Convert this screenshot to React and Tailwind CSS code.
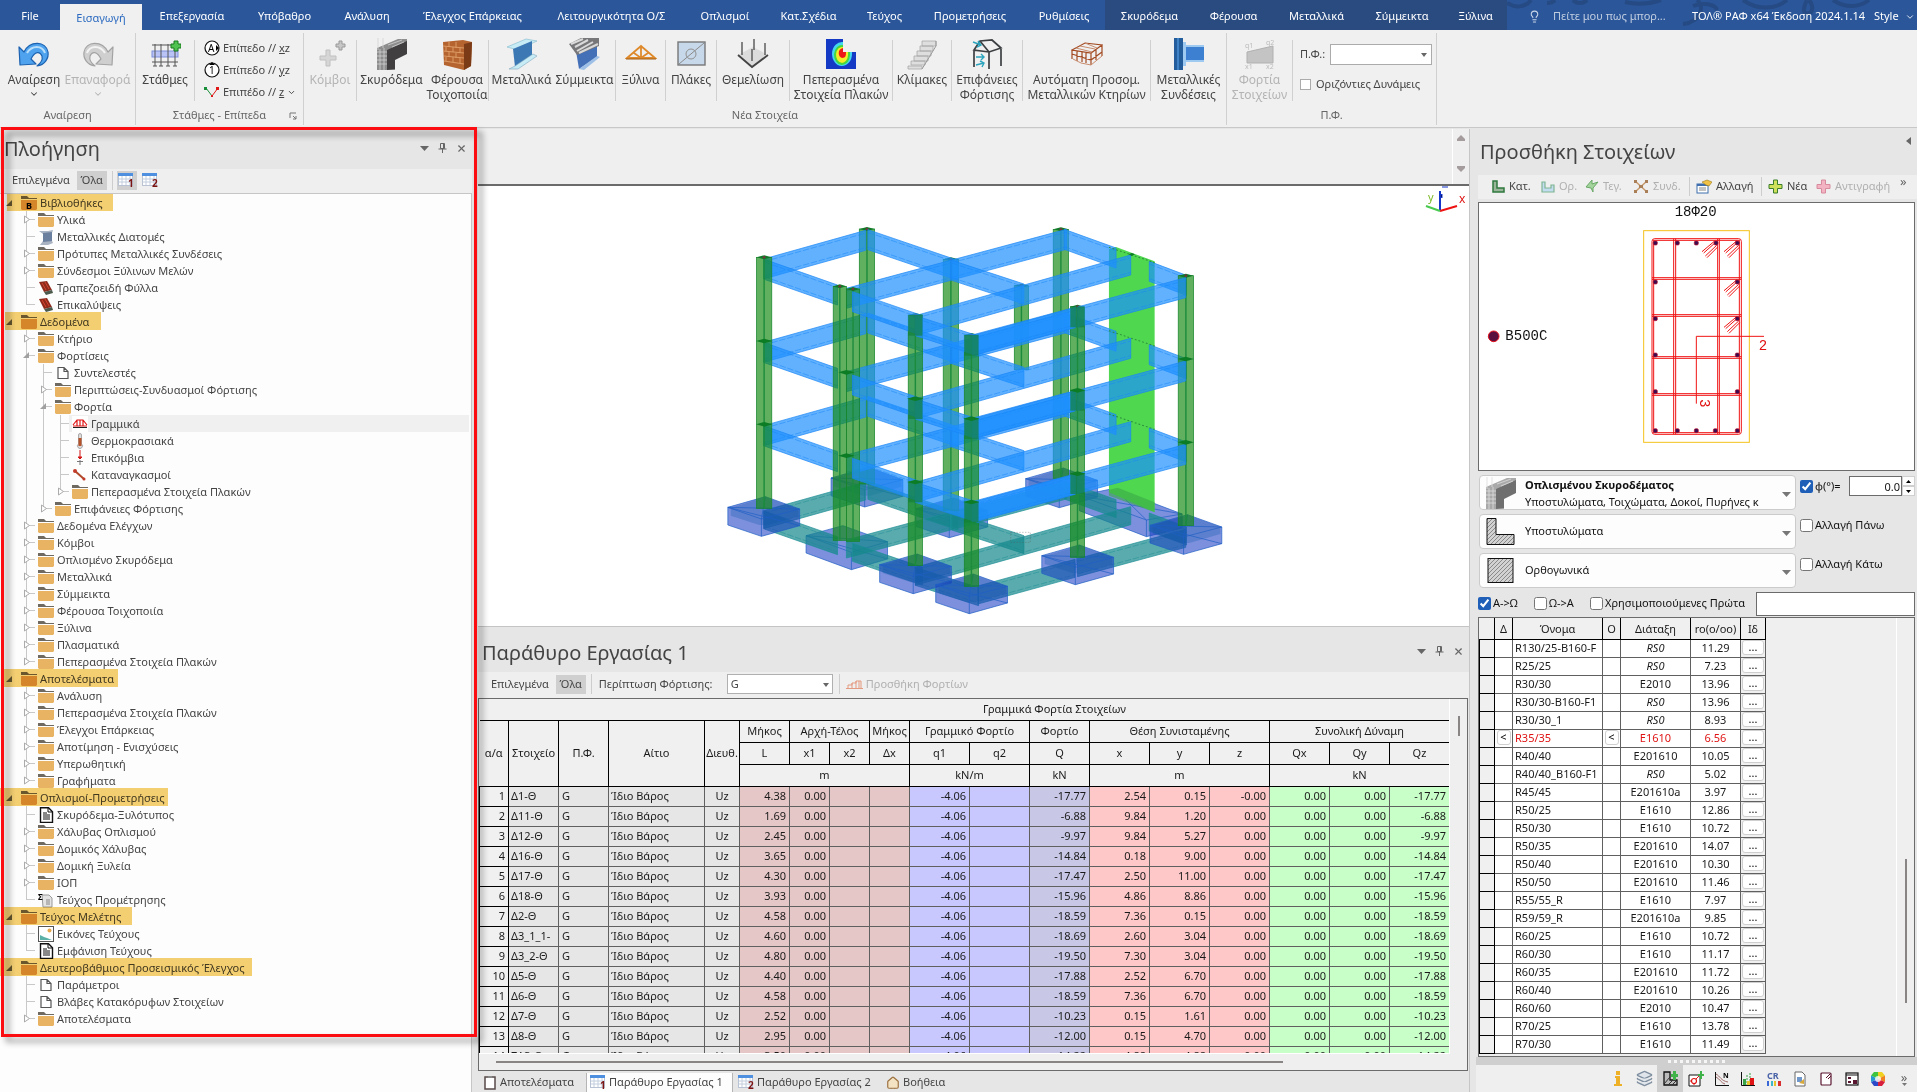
import React from "react";
import { X, Lightbulb, ChevronDown, House, Layers } from "lucide-react";

/* ---------- data ---------- */

const TABS = [
  ["File", "w-[60px]"],
  ["Εισαγωγή", "w-[82px]"],
  ["Επεξεργασία", "w-[100px]"],
  ["Υπόβαθρο", "w-[85px]"],
  ["Ανάλυση", "w-[80px]"],
  ["Έλεγχος Επάρκειας", "w-[131px]"],
  ["Λειτουργικότητα Ο/Σ", "w-[147px]"],
  ["Οπλισμοί", "w-[80px]"],
  ["Κατ.Σχέδια", "w-[87px]"],
  ["Τεύχος", "w-[65px]"],
  ["Προμετρήσεις", "w-[106px]"],
  ["Ρυθμίσεις", "w-[82px]"],
];

const CONTEXT_TABS = [
  ["Σκυρόδεμα", "w-[89px]"],
  ["Φέρουσα", "w-[79px]"],
  ["Μεταλλικά", "w-[87px]"],
  ["Σύμμεικτα", "w-[84px]"],
  ["Ξύλινα", "w-[63px]"],
];

const TREE = [
  [0, "lib", "Βιβλιοθήκες", "left-[7px] w-[106px]"],
  [1, "folder", "Υλικά"],
  [1, "beam", "Μεταλλικές Διατομές"],
  [1, "folder", "Πρότυπες Μεταλλικές Συνδέσεις"],
  [1, "folder", "Σύνδεσμοι Ξύλινων Μελών"],
  [1, "sheet", "Τραπεζοειδή Φύλλα"],
  [1, "sheet", "Επικαλύψεις"],
  [0, "root", "Δεδομένα", "left-[5px] w-[96px]"],
  [1, "folder", "Κτήριο"],
  [1, "open", "Φορτίσεις"],
  [2, "page", "Συντελεστές"],
  [2, "folder", "Περιπτώσεις-Συνδυασμοί Φόρτισης"],
  [2, "open", "Φορτία"],
  [3, "linear", "Γραμμικά"],
  [3, "thermo", "Θερμοκρασιακά"],
  [3, "nodal", "Επικόμβια"],
  [3, "forced", "Καταναγκασμοί"],
  [3, "folder", "Πεπερασμένα Στοιχεία Πλακών"],
  [2, "folder", "Επιφάνειες Φόρτισης"],
  [1, "folder", "Δεδομένα Ελέγχων"],
  [1, "folder", "Κόμβοι"],
  [1, "folder", "Οπλισμένο Σκυρόδεμα"],
  [1, "folder", "Μεταλλικά"],
  [1, "folder", "Σύμμεικτα"],
  [1, "folder", "Φέρουσα Τοιχοποιία"],
  [1, "folder", "Ξύλινα"],
  [1, "folder", "Πλασματικά"],
  [1, "folder", "Πεπερασμένα Στοιχεία Πλακών"],
  [0, "root", "Αποτελέσματα", "left-[4px] w-[114px]"],
  [1, "folder", "Ανάλυση"],
  [1, "folder", "Πεπερασμένα Στοιχεία Πλακών"],
  [1, "folder", "Έλεγχοι Επάρκειας"],
  [1, "folder", "Αποτίμηση - Ενισχύσεις"],
  [1, "folder", "Υπερωθητική"],
  [1, "folder", "Γραφήματα"],
  [0, "root", "Οπλισμοί-Προμετρήσεις", "left-0 w-[168px]"],
  [1, "doc", "Σκυρόδεμα-Ξυλότυπος"],
  [1, "folder", "Χάλυβας Οπλισμού"],
  [1, "folder", "Δομικός Χάλυβας"],
  [1, "folder", "Δομική Ξυλεία"],
  [1, "folder", "ΙΟΠ"],
  [1, "sum", "Τεύχος Προμέτρησης"],
  [0, "root", "Τεύχος Μελέτης", "left-[4px] w-[128px]"],
  [1, "image", "Εικόνες Τεύχους"],
  [1, "doc", "Εμφάνιση Τεύχους"],
  [0, "root", "Δευτεροβάθμιος Προσεισμικός Έλεγχος", "left-0 w-[252px]"],
  [1, "page", "Παράμετροι"],
  [1, "page", "Βλάβες Κατακόρυφων Στοιχείων"],
  [1, "folder", "Αποτελέσματα"],
];

const LOADS = [
  ["Δ1-Θ", "4.38", "-17.77", "2.54", "0.15", "-0.00"],
  ["Δ11-Θ", "1.69", "-6.88", "9.84", "1.20", "0.00"],
  ["Δ12-Θ", "2.45", "-9.97", "9.84", "5.27", "0.00"],
  ["Δ16-Θ", "3.65", "-14.84", "0.18", "9.00", "0.00"],
  ["Δ17-Θ", "4.30", "-17.47", "2.50", "11.00", "0.00"],
  ["Δ18-Θ", "3.93", "-15.96", "4.86", "8.86", "0.00"],
  ["Δ2-Θ", "4.58", "-18.59", "7.36", "0.15", "0.00"],
  ["Δ3_1_1-", "4.60", "-18.69", "2.60", "3.04", "0.00"],
  ["Δ3_2-Θ", "4.80", "-19.50", "7.30", "3.04", "0.00"],
  ["Δ5-Θ", "4.40", "-17.88", "2.52", "6.70", "0.00"],
  ["Δ6-Θ", "4.58", "-18.59", "7.36", "6.70", "0.00"],
  ["Δ7-Θ", "2.52", "-10.23", "0.15", "1.61", "0.00"],
  ["Δ8-Θ", "2.95", "-12.00", "0.15", "4.70", "0.00"],
  ["ΣΔ3-Θ", "3.50", "-14.22", "4.88", "4.88", "0.00"],
];

const SECTIONS = [
  ["R130/25-B160-F", "RS0", "11.29"],
  ["R25/25", "RS0", "7.23"],
  ["R30/30", "E2010", "13.96"],
  ["R30/30-B160-F1", "RS0", "13.96"],
  ["R30/30_1", "RS0", "8.93"],
  ["R35/35", "E1610", "6.56"],
  ["R40/40", "E201610", "10.05"],
  ["R40/40_B160-F1", "RS0", "5.02"],
  ["R45/45", "E201610a", "3.97"],
  ["R50/25", "E1610", "12.86"],
  ["R50/30", "E1610", "10.72"],
  ["R50/35", "E201610", "14.07"],
  ["R50/40", "E201610", "10.30"],
  ["R50/50", "E201610", "11.46"],
  ["R55/55_R", "E1610", "7.97"],
  ["R59/59_R", "E201610a", "9.85"],
  ["R60/25", "E1610", "10.72"],
  ["R60/30", "E1610", "11.17"],
  ["R60/35", "E201610", "11.72"],
  ["R60/40", "E201610", "10.26"],
  ["R60/60", "E2010", "10.47"],
  ["R70/25", "E1610", "13.78"],
  ["R70/30", "E1610", "11.49"],
];

/* ---------- ribbon icons ---------- */

const Svg = ({ w = 32, h = 32, children }) => (
  <svg width={w} height={h} viewBox={`0 0 ${w} ${h}`} className="shrink-0" aria-hidden="true">
    {children}
  </svg>
);

const UndoIcon = () => (
  <Svg>
    <path d="M1 9l1 18 16-1-5-5c4-8 9-8 11-3 1 4-1 7-5 10 8-1 12-8 11-14C28 3 12 2 6 14z" fill="#4fa3ee" stroke="#1c62b0" strokeWidth="1.2" strokeLinejoin="round" />
    <path d="M9 15C14 7 24 7 27 15" fill="none" stroke="#b9defa" strokeWidth="2" />
  </Svg>
);
const RedoIcon = () => (
  <Svg>
    <path d="M31 9l-1 18-16-1 5-5c-4-8-9-8-11-3-1 4 1 7 5 10C5 27 1 20 2 14 4 3 20 2 26 14z" fill="#cfcfcf" stroke="#a3a3a3" strokeWidth="1.2" strokeLinejoin="round" />
    <path d="M23 15C18 7 8 7 5 15" fill="none" stroke="#f3f3f3" strokeWidth="2" />
  </Svg>
);
const LevelsIcon = () => (
  <Svg>
    <rect x="3" y="13" width="26" height="6" fill="#b9c3f5" stroke="#7d8fdc" />
    <path d="M6 6v22M12 6v22M19 6v22M26 6v22M3 7h26M3 24h26" stroke="#555" fill="none" />
    <path d="M4 28h4M10 28h4M17 28h4M24 28h4" stroke="#555" />
    <path d="M22 6h3V3h4v3h3v4h-3v3h-4v-3h-3z" fill="#4fc24f" stroke="#177a1c" />
  </Svg>
);
const NodesIcon = () => (
  <Svg>
    <path d="M12 12h4v6h6v4h-6v6h-4v-6H6v-4h6z" fill="#d6d6d6" stroke="#c0c0c0" />
    <path d="M22 6h3V3h3v3h3v3h-3v3h-3V9h-3z" fill="#c6c6c6" stroke="#999" />
  </Svg>
);
const ConcreteIcon = () => (
  <Svg>
    <path d="M1 10 22 1h9v14l-12 6v11H1z" fill="#8d8d8d" />
    <path d="M11 12 31 3v13l-12 6v9l-8 1z" fill="#413f40" />
    <path d="M2 0v12M7 0v10M1 14h10M1 18h10M1 22h10M1 26h10M4 11v21M8 10v22M12 7l14-5M16 9l12-5" stroke="#d2d2d2" strokeWidth=".8" />
  </Svg>
);
const BrickIcon = () => (
  <Svg>
    <path d="M2 4 22 2l9 2-1 24-7 4L3 27z" fill="#b5642f" />
    <path d="m23 6 8-2-1 24-7 4z" fill="#7b3b17" />
    <path d="M2 8l21 2M2 13l21 2M3 18l20 2M3 23l20 3M8 4v5M15 4v6M5 9v4M12 9v5M19 10v5M8 14v5M15 15v5M5 19v4M12 19v5M19 20v5" stroke="#e0a06c" strokeWidth=".9" fill="none" />
  </Svg>
);
const SteelIcon = () => (
  <Svg>
    <path d="M1 9 20 1l11 2-19 9z" fill="#c8ecf5" stroke="#7fb9cc" strokeWidth=".6" />
    <path d="m7 11 19-8v14L9 29z" fill="#3c78b4" />
    <path d="m9 28 18-12 4 2-19 13H3z" fill="#c8ecf5" stroke="#7fa7bd" strokeWidth=".6" />
  </Svg>
);
const CompositeIcon = () => (
  <Svg>
    <path d="M7 13 28 8v11L10 31z" fill="#4470b8" />
    <path d="m10 31 18-13 3 1-16 13z" fill="#9fc0e6" />
    <path d="M0 6 12 0h18v8L8 17z" fill="#77777a" />
    <path d="M2 6 14 1M6 9l13-7M8 13l16-9M10 15l19-9" stroke="#d9d9d9" strokeWidth="2" />
  </Svg>
);
const TrussIcon = () => (
  <Svg>
    <path d="M2 20 16 8l14 12zM16 9v11M9 15l7 5 7-5" fill="none" stroke="#de8a2c" strokeWidth="1.8" />
    <path d="M1 21h30" stroke="#a35f14" />
  </Svg>
);
const SlabIcon = () => (
  <Svg>
    <rect x="3" y="4" width="27" height="23" fill="#c7d8ea" stroke="#777" strokeWidth="1.4" />
    <path d="M4 26 29 5" stroke="#8a8a8a" />
    <circle cx="16" cy="16" r="5" fill="none" stroke="#909090" />
  </Svg>
);
const FoundationIcon = () => (
  <Svg>
    <path d="m1 17 15-8 15 8-16 12z" fill="#dcdcdc" />
    <path d="m1 17 14 12 16-12" fill="none" stroke="#444" strokeWidth="1.8" />
    <path d="M5 4v13M17 1v11M15 11v12M28 5v12" stroke="#555" strokeWidth="1.4" />
  </Svg>
);
const FemIcon = () => (
  <Svg>
    <path d="M1 1h17v13h13v17H1z" fill="#1439c4" />
    <path d="M18 4a10 12 0 1 0 9 12l0-2h-9z" fill="#43d6ef" />
    <path d="M18 7a8 10 0 1 0 7 10v-3h-7z" fill="#46d63e" />
    <path d="M18 9a6 8 0 1 0 5 8v-3h-5z" fill="#f4ec27" />
    <path d="M18 10c-6 1-5 9-1 10 4 0 4-3 4-6h-3z" fill="#ee1717" />
  </Svg>
);
const StairsIcon = () => (
  <Svg>
    <path d="M16 3h14v5H16zM14 8h13v5H14zM11 13h14v5H11zM8 18h14v5H8zM5 23h14v4H5zM2 28h14v3H2z" fill="#dedede" stroke="#a8a8a8" strokeWidth=".8" />
    <path d="M30 3v5L16 31" stroke="#999" fill="none" />
  </Svg>
);
const SurfaceIcon = () => (
  <Svg>
    <path d="m3 12 6-9 12-1 9 8-12 4zM3 12l15 2M9 3l9 11M3 12v17M18 14v17M30 11v17" fill="none" stroke="#3d4043" strokeWidth="1.7" />
    <path d="m2 4 8 3m-3-4 3 4-4 2M5 19h8m-3-3 3 3-3 3M5 27l8-2m-4-2 4 2-2 4" fill="none" stroke="#2ba4be" strokeWidth="1.4" />
  </Svg>
);
const AutoIcon = () => (
  <Svg>
    <path d="M1 12 14 5l17 2-11 8zM1 12v9M20 15v12M31 7v11M6 13v10M11 14v10M15 15v10M25 12v10M1 16l19 6 11-8" fill="none" stroke="#a24a22" strokeWidth="1.2" />
    <path d="M5 10l16 4M9 8l15 3M14 5l12 5M2 21l8 4 10 2 11-9" fill="none" stroke="#c98d6f" />
  </Svg>
);
const ConnectionIcon = () => (
  <Svg>
    <rect x="1" y="0" width="9" height="32" fill="#245d9c" />
    <rect x="4" y="0" width="2" height="32" fill="#3f82c6" />
    <rect x="10" y="4" width="3" height="24" fill="#9ec9f0" />
    <rect x="13" y="8" width="18" height="15" fill="#3d7fd0" />
    <path d="M13 8h18M13 23h18" stroke="#9ec9f0" strokeWidth="2" />
  </Svg>
);
const LoadsIcon = () => (
  <Svg>
    <path d="m3 14 26-6v17H3z" fill="#c4c4c4" stroke="#b0b0b0" />
    <g fill="#bcbcbc" fontSize="7" fontFamily="'Noto Sans', sans-serif">
      <text x="1" y="10">q1</text>
      <text x="22" y="7">q2</text>
      <text x="1" y="31">x1</text>
      <text x="22" y="31">x2</text>
    </g>
  </Svg>
);

/* ---------- ribbon ---------- */

const Sep = () => <div className="mt-[2px] h-[61px] w-px shrink-0 bg-[#d0d0d0]" />;

function Big({ icon, lines, width, disabled, arrow }) {
  return (
    <button type="button" disabled={disabled} className={`flex shrink-0 flex-col items-center whitespace-nowrap ${width} ${disabled ? "text-[#b4b4b4]" : "text-[#444]"}`}>
      {icon}
      <span className="mt-[2px] text-[12px] leading-[15px]">
        {lines.map((l) => (
          <span key={l} className="block text-center">{l}</span>
        ))}
      </span>
      {arrow && <ChevronDown size={10} strokeWidth={2.5} className="mt-[2px]" />}
    </button>
  );
}

function Group({ label, children, launcher }) {
  return (
    <section className="flex shrink-0">
      <div className="flex flex-col">
        <div className="flex h-[76px] pt-[7px]">{children}</div>
        <div className="relative text-center text-[11px] leading-[16px] text-[#666]">
          {label}
          {launcher && (
            <svg width="8" height="8" className="absolute right-[6px] top-[5px]" aria-hidden="true">
              <path d="M1 6V1h6M4 4l3 3M7 4v3H4" fill="none" stroke="#777" />
            </svg>
          )}
        </div>
      </div>
      <div className="my-[2px] w-px bg-[#d0d0d0]" />
    </section>
  );
}

const PlaneButton = ({ icon, text, axis, arrow }) => (
  <button type="button" className="flex h-[22px] items-center gap-[3px] whitespace-nowrap text-[11px] text-[#444]">
    {icon}
    <span>
      {text} // <u>{axis[0]}</u>{axis.slice(1)}
    </span>
    {arrow && <ChevronDown size={9} strokeWidth={2.5} />}
  </button>
);

function TitleBar() {
  return (
    <header className="flex h-[30px] shrink-0 bg-[#2b579a] text-[11px] text-white">
      <nav className="flex shrink-0">
        {TABS.map(([t, w]) => (
          <button key={t} type="button" className={`whitespace-nowrap pt-[3px] ${w} ${t === "Εισαγωγή" ? "mt-[4px] bg-[#f0f0f0] pt-0 text-[#2b6ac0]" : ""}`}>
            {t}
          </button>
        ))}
      </nav>
      <nav className="flex shrink-0 bg-[#2a4b80]">
        {CONTEXT_TABS.map(([t, w]) => (
          <button key={t} type="button" className={`whitespace-nowrap pt-[3px] ${w}`}>{t}</button>
        ))}
      </nav>
      <div className="relative flex min-w-0 flex-1 items-center overflow-hidden pl-[21px] pt-[3px]">
        <svg className="absolute left-0 top-0" width="410" height="30" aria-hidden="true">
          <g fill="none" stroke="#264a83" strokeWidth="4">
            <path d="M0 3c8 5 18 5 24-3M40 3c4 0 6-1 8-3M66 0c4 4 10 4 14 0M118 2c16 4 30 0 36-2M176 24c18-2 22-18 14-24M186 6c10-4 22-2 24 4M236 0c14 10 32 10 44 0M300 0c-6 12-2 16 4 12 3-4 0-10-2-12M326 0c12 8 26 8 36 0" />
          </g>
        </svg>
        <Lightbulb size={13} className="relative shrink-0 text-[#c9d6e8]" />
        <span className="relative ml-[12px] w-[139px] shrink-0 whitespace-nowrap text-[#c0cde0]">Πείτε μου πως μπορ...</span>
        <span className="relative shrink-0 whitespace-nowrap">ΤΟΛ® ΡΑΦ x64 Έκδοση 2024.1.14</span>
        <button type="button" className="relative ml-[9px] flex shrink-0 items-center gap-[6px]">
          Style <ChevronDown size={10} />
        </button>
      </div>
    </header>
  );
}

function Ribbon() {
  return (
    <div className="flex h-[98px] shrink-0 overflow-hidden border-b border-[#c8c8c8] bg-[#f0f0f0] pt-px">
      <Group label="Αναίρεση">
        <div className="w-[4px]" />
        <Big icon={<UndoIcon />} lines={["Αναίρεση"]} width="w-[60px]" arrow />
        <Big icon={<RedoIcon />} lines={["Επαναφορά"]} width="w-[67px]" disabled arrow />
        <div className="w-[4px]" />
      </Group>
      <Group label="Στάθμες - Επίπεδα" launcher>
        <Big icon={<LevelsIcon />} lines={["Στάθμες"]} width="w-[58px]" />
        <Sep />
        <div className="-mt-px flex w-[108px] flex-col pl-[9px]">
          <PlaneButton
            icon={<svg width="16" height="16" aria-hidden="true"><circle cx="8" cy="8" r="7" fill="#fff" stroke="#111" strokeWidth="1.2" /><text x="4" y="12" fontSize="10" fontFamily="'Noto Sans', sans-serif">A</text><path d="m12 5 3 3-3 3z" /></svg>}
            text="Επίπεδο" axis="xz" />
          <PlaneButton
            icon={<svg width="16" height="16" aria-hidden="true"><circle cx="8" cy="8" r="7" fill="#fff" stroke="#111" strokeWidth="1.2" /><text x="5" y="12" fontSize="10" fontFamily="'Noto Sans', sans-serif">1</text><path d="m5 3 3-3 3 3z" /></svg>}
            text="Επίπεδο" axis="yz" />
          <PlaneButton
            icon={<svg width="16" height="16" aria-hidden="true"><path d="m2 4 6 8" stroke="#1a8f3a" /><path d="m8 12 6-8" stroke="#e01818" /><path d="M0 3h3v3H0z" fill="#1a8f3a" /><path d="M12 3h3v3h-3zM7 11h2v2H7z" fill="#e01818" /></svg>}
            text="Επιπέδο" axis="z" arrow />
        </div>
      </Group>
      <Group label="Νέα Στοιχεία">
        <Big icon={<NodesIcon />} lines={["Κόμβοι"]} width="w-[52px]" disabled />
        <Sep />
        <Big icon={<ConcreteIcon />} lines={["Σκυρόδεμα"]} width="w-[69px]" />
        <Big icon={<BrickIcon />} lines={["Φέρουσα", "Τοιχοποιία"]} width="w-[62px]" />
        <Sep />
        <Big icon={<SteelIcon />} lines={["Μεταλλικά"]} width="w-[65px]" />
        <Big icon={<CompositeIcon />} lines={["Σύμμεικτα"]} width="w-[61px]" />
        <Sep />
        <Big icon={<TrussIcon />} lines={["Ξύλινα"]} width="w-[49px]" />
        <Sep />
        <Big icon={<SlabIcon />} lines={["Πλάκες"]} width="w-[50px]" />
        <Sep />
        <Big icon={<FoundationIcon />} lines={["Θεμελίωση"]} width="w-[72px]" />
        <Sep />
        <Big icon={<FemIcon />} lines={["Πεπερασμένα", "Στοιχεία Πλακών"]} width="w-[102px]" />
        <Sep />
        <Big icon={<StairsIcon />} lines={["Κλίμακες"]} width="w-[58px]" />
        <Sep />
        <Big icon={<SurfaceIcon />} lines={["Επιφάνειες", "Φόρτισης"]} width="w-[70px]" />
        <Sep />
        <Big icon={<AutoIcon />} lines={["Αυτόματη Προσομ.", "Μεταλλικών Κτηρίων"]} width="w-[127px]" />
        <Sep />
        <Big icon={<ConnectionIcon />} lines={["Μεταλλικές", "Συνδέσεις"]} width="w-[75px]" />
      </Group>
      <Group label="Π.Φ.">
        <Big icon={<LoadsIcon />} lines={["Φορτία", "Στοιχείων"]} width="w-[65px]" disabled />
        <Sep />
        <div className="flex w-[143px] flex-col pl-[7px] pt-[6px] text-[11px] text-[#444]">
          <label className="flex h-[21px] items-center gap-[5px]">
            Π.Φ.:
            <span className="relative mr-[4px] flex-1">
              <select className="block h-[21px] w-full appearance-none border border-[#ababab] bg-white" />
              <svg width="6" height="4" className="absolute right-[5px] top-[9px]" aria-hidden="true"><path d="M0 0h6L3 4z" fill="#666" /></svg>
            </span>
          </label>
          <label className="mt-[10px] flex h-[18px] items-center gap-[5px] whitespace-nowrap">
            <input type="checkbox" className="h-[11px] w-[11px] appearance-none border border-[#ababab] bg-white" />
            Οριζόντιες Δυνάμεις
          </label>
        </div>
      </Group>
    </div>
  );
}

/* ---------- navigation panel ---------- */

function TreeIcon({ type }) {
  if (type === "root" || type === "lib" || type === "folder" || type === "open")
    return (
      <Svg w={16} h={16}>
        <path d="M0 3V1h6l2 2h8v1H0z" fill="#6e6a62" />
        <path d="M0 5h16v9l-1 1H1l-1-1z" fill={type === "folder" || type === "open" ? "#e8b464" : "#dda35c"} />
        {type === "lib" && <text x="5" y="14" fontSize="9" fontWeight="700" fontFamily="'Noto Sans', sans-serif">B</text>}
      </Svg>
    );
  if (type === "beam")
    return (
      <Svg w={16} h={16}>
        <path d="M1 2h9l5-1-1 3v8l1 2-5 2H2l3-4V5z" fill="#a9b3c2" />
        <path d="M5 4l9-1v9l-9 1z" fill="#6b7f9f" />
      </Svg>
    );
  if (type === "sheet")
    return (
      <Svg w={16} h={16}>
        <path d="m1 2 8-1 5 9-8 2z" fill="#8d2b1d" />
        <path d="m6 12 8-2 1 3-7 2z" fill="#4b5a4c" />
        <path d="m4 3 4 7M7 2l4 7" stroke="#d8442e" />
      </Svg>
    );
  if (type === "page")
    return (
      <Svg w={16} h={16}>
        <path d="M3 2.500h6l4 4v7H3zM9 2.500v4h4" fill="#fff" stroke="#555" strokeWidth="1.2" />
      </Svg>
    );
  if (type === "doc")
    return (
      <Svg w={16} h={16}>
        <path d="M2.500.8h8l4 4v10.700h-12z" fill="#fff" stroke="#111" strokeWidth="1.400" />
        <path d="M10 1v4h4M5 6h4M5 8h7M5 10h7M5 12h7" stroke="#111" fill="none" />
      </Svg>
    );
  if (type === "sum")
    return (
      <Svg w={16} h={16}>
        <path d="M4 3h7l3 3v9H5z" fill="#e4e4e4" stroke="#999" />
        <path d="M8 8h4M8 10h4M8 12h4" stroke="#888" />
        <text x="0" y="8" fontSize="8" fontWeight="700" fontFamily="'Noto Sans', sans-serif">Σ</text>
      </Svg>
    );
  if (type === "image")
    return (
      <Svg w={16} h={16}>
        <rect x=".5" y=".5" width="15" height="15" fill="#fff" stroke="#555" />
        <circle cx="11.500" cy="4.500" r="2" fill="#e8a94e" />
        <path d="M2 14V9l4 2 3 1 5 2z" fill="#5bb0a8" />
      </Svg>
    );
  if (type === "linear")
    return (
      <Svg w={16} h={16}>
        <rect width="16" height="16" fill="#fff" />
        <path d="M1 10h14M1 9l4-5h6l4 5M5 4v6M8 4v6M11 4v6" fill="none" stroke="#e01616" strokeWidth="1.200" />
        <path d="M1 11.500h14" stroke="#222" />
      </Svg>
    );
  if (type === "thermo")
    return (
      <Svg w={16} h={16}>
        <path d="M6.500 2a1.500 1.500 0 0 1 3 0v9a2.500 2.500 0 1 1-3 0z" fill="#ddd" stroke="#999" strokeWidth=".8" />
        <path d="M8 5v8" stroke="#b5532a" strokeWidth="3" />
      </Svg>
    );
  if (type === "nodal")
    return (
      <Svg w={16} h={16}>
        <path d="M8 0v9M6 7l2 2 2-2z" stroke="#d31616" fill="#d31616" />
        <path d="M5 11.500h6M8 10v5" stroke="#777" />
      </Svg>
    );
  return (
    <Svg w={16} h={16}>
      <path d="m3 4 9 8" stroke="#b04a2a" strokeWidth="2" />
      <circle cx="3" cy="4" r="2" fill="#c23b2a" />
      <circle cx="12" cy="12" r="1.500" fill="#c23b2a" />
    </Svg>
  );
}

function TreeRow({ row, index }) {
  const [level, type, label, mark] = row;
  const next = TREE.slice(index + 1).find((r) => r[0] <= level);
  const isLast = !next || next[0] < level;
  const closed = type === "folder";
  return (
    <li role="treeitem" aria-level={level + 1} aria-selected={type === "linear"} className="relative flex h-[17px] items-center">
      {level === 0 ? (
        <span className="flex w-[18px] shrink-0 justify-end pr-[6px]">
          <svg width="6" height="6" aria-hidden="true"><path d="M6 0v6H0z" fill="#666" /></svg>
        </span>
      ) : (
        <span className="w-[18px] shrink-0" />
      )}
      {Array.from({ length: level }, (_, i) => {
        const own = i === level - 1;
        return (
          <svg key={i} width="17" height="17" className="shrink-0" aria-hidden="true">
            <path d={own && isLast ? "M8.500 0v9" : "M8.500 0v17"} stroke="#c8c8c8" fill="none" />
            {own && <path d="M9 8.500h8" stroke="#c8c8c8" />}
            {own && closed && <path d="M6.500 5v7l5-3.500z" fill="#fdfdfd" stroke="#ababab" />}
            {own && type === "open" && <path d="M11 5v6H5z" fill="#a0a0a0" />}
          </svg>
        );
      })}
      <span className={`flex h-full items-center gap-[3px] pl-[3px] text-[11px] leading-[17px] whitespace-nowrap text-[#444] ${type === "linear" ? "mr-[2px] flex-1 bg-[#f0f0f0]" : ""}`}>
        <TreeIcon type={type} />
        {label}
      </span>
      {mark && <span className={`absolute -top-px h-[18px] bg-[#f6d173] mix-blend-multiply ${mark}`} />}
    </li>
  );
}

const PanelButtons = () => (
  <div className="flex items-center gap-[9px] text-[#666]">
    <button type="button" aria-label="Μενού" className="flex w-[10px] justify-center">
      <svg width="9" height="5" aria-hidden="true"><path d="M0 0h9L4.500 5z" fill="#666" /></svg>
    </button>
    <button type="button" aria-label="Καρφίτσωμα">
      <svg width="9" height="11" aria-hidden="true"><path d="M2.500.5h4v5h-4zM5.500 1v5M.5 6h8M4.500 6v4" fill="none" stroke="#666" /></svg>
    </button>
    <button type="button" aria-label="Κλείσιμο"><X size={11} strokeWidth={2.500} /></button>
  </div>
);

const GridIcon = ({ n }) => (
  <Svg w={18} h={17}>
    <rect x=".5" y="1.500" width="14" height="12" fill="#fff" stroke="#b8c4d6" />
    <rect x="0" y="1" width="15" height="3" fill="#4f8fe0" />
    <path d="M4 4v9M8 4v9M12 4v9M1 7h13M1 10h13" stroke="#c3cede" />
    <text x="10" y="15" fontSize="10" fontWeight="700" fill="#7c1414" fontFamily="'Noto Sans', sans-serif">{n}</text>
  </Svg>
);

function Navigation() {
  return (
    <aside className="relative flex w-[478px] shrink-0 flex-col bg-[#e6e6e6]">
      <div className="flex h-[40px] shrink-0 items-center justify-between pl-[4px] pr-[11px]">
        <h2 className="text-[20px] text-[#444]">Πλοήγηση</h2>
        <div className="pb-[2px]"><PanelButtons /></div>
      </div>
      <div className="mr-[6px] flex h-[24px] shrink-0 items-center bg-[#efefef] pb-[2px] pl-[12px] text-[11px] text-[#444]">
        <button type="button">Επιλεγμένα</button>
        <button type="button" className="ml-[7px] h-[19px] w-[30px] bg-[#cfcfcf]">Όλα</button>
        <span className="ml-[5px] h-[19px] w-px bg-[#cdcdcd]" />
        <button type="button" aria-label="Παράθυρο 1" className="ml-[4px] flex h-[19px] w-[20px] items-center justify-center bg-[#cfcfcf]"><GridIcon n="1" /></button>
        <button type="button" aria-label="Παράθυρο 2" className="ml-[5px]"><GridIcon n="2" /></button>
      </div>
      <div className="mr-[6px] min-h-0 flex-1 overflow-hidden border-r border-t border-[#c6c6c6] bg-[#fdfdfd]">
        <ul role="tree">
          {TREE.map((row, i) => <TreeRow key={i} row={row} index={i} />)}
        </ul>
      </div>
      {/* frame that marks the panel's content */}
      <div className="pointer-events-none absolute -top-[2px] left-px z-10 h-[910px] w-[476px] border-[3px] border-[#fb0d12] drop-shadow-[5px_5px_3px_rgba(0,0,0,0.45)]" />
    </aside>
  );
}

/* ---------- 3D model ---------- */

const quad = (x1, y1, x2, y2, h) => `M${x1} ${y1}L${x2} ${y2}V${y2 + h}L${x1} ${y1 + h}Z`;

const BEAMS_BACK = [
  [178, 180, 464, 94], [180, 181, 385, 258], [470, 92, 722, 184], [702, 184, 1026, 91],
  [410, 268, 702, 184], [705, 184, 907, 255], [1020, 91, 1165, 147], [603, 350, 1206, 168],
  [1258, 187, 1362, 229],
];
const BEAMS_FRONT = [
  [427, 278, 623, 350], [603, 350, 780, 411], [762, 408, 1053, 324], [778, 406, 1050, 326], [1057, 324, 1360, 236],
];
const COLUMNS_BACK = [
  [446, 489, 90, 855], [681, 724, 181, 935], [989, 1032, 91, 838], [880, 920, 260, 512],
];
const COLUMNS_FRONT = [
  [158, 201, 175, 928], [373, 410, 262, 1024], [410, 447, 270, 1027], [583, 623, 348, 1100],
  [740, 780, 408, 1162], [1037, 1077, 323, 1075], [1339, 1382, 230, 980],
];
const FOOTINGS_BACK = [[467, 840], [704, 932], [1012, 842]];
const FOOTINGS_FRONT = [[178, 928], [603, 1100], [760, 1160], [1057, 1073], [1360, 982]];

const Beam = ({ b, dy, color, edge, h }) => {
  const [x1, y1, x2, y2] = b;
  return (
    <g>
      <path d={quad(x1, y1 + dy, x2, y2 + dy, h)} fill={color} fillOpacity=".7" stroke={edge} strokeWidth="2" />
      <path d={`M${x1} ${y1 + dy + 8}L${x2} ${y2 + dy + 8}M${x1} ${y1 + dy + h - 8}L${x2} ${y2 + dy + h - 8}`} stroke={edge} strokeWidth="1.500" strokeDasharray="18 5" fill="none" />
    </g>
  );
};
const Column = ({ c }) => {
  const [x1, x2, y1, y2] = c;
  const m = (x1 + x2) / 2;
  return (
    <g>
      <rect x={x1} y={y1} width={x2 - x1} height={y2 - y1} fill="#158a15" fillOpacity=".68" stroke="#17852a" strokeWidth="2" />
      <path d={`M${m} ${y1}V${y2}`} stroke="#1c8c3c" strokeWidth="4" />
      <path d={`M${x1} ${y1}l${m - x1}-6 ${m - x1} 6-${m - x1} 6z`} fill="#0f7a28" />
      <circle cx={m} cy={y1} r="4" fill="#6b3b3b" />
    </g>
  );
};
const Footing = ({ f }) => {
  const [x, y] = f;
  return (
    <g transform={`translate(${x} ${y})`} stroke="#1f5fc4" strokeWidth="2" strokeLinejoin="round">
      <path d="M-100-3 5-35l96 37v50L-6 84l-94-34z" fill="#1e3fc4" fillOpacity=".58" />
      <path d="M-92-2 5-33l92 34v22L10 50-12 50-92 22z" fill="#0d55a8" fillOpacity=".28" stroke="none" />
      <path d="M-100-3-6 32 101 2M-6 32v52M-100-3 101 2M5-35-6 32M-100-3 101 52M-6 32" fill="none" />
    </g>
  );
};

const Model = () => (
  <svg viewBox="0 0 1568 1290" preserveAspectRatio="none" className="h-[430px] w-[560px] shrink-0" role="img" aria-label="Τρισδιάστατο μοντέλο κτηρίου">
    {FOOTINGS_BACK.map((f, i) => <Footing key={i} f={f} />)}
    <g stroke="#1f5fc4" strokeWidth="2">
      <path d="M1062 890l98-22 190 77v42l-100 26-188-78z" fill="#1e3fc4" fillOpacity=".58" />
      <path d="M1062 890l188 73 100-18M1250 963v50M1062 890l288 55M1250 963l-90-95" fill="none" />
      <path d="M297 1010l103-30 125 48v52l-101 32-127-50z" fill="#1e3fc4" fillOpacity=".58" />
      <path d="M297 1010l127 50 101-32M424 1060v52M297 1010l228 18M297 1010l228 70" fill="none" />
    </g>
    {BEAMS_BACK.concat(BEAMS_FRONT.filter((_, i) => i !== 2)).map((b, i) => (
      <Beam key={i} b={b} dy={755} color="#14888a" edge="#1c8f96" h={54} />
    ))}
    <path d="M870 1000h55v30h-55z" fill="none" stroke="#555" strokeDasharray="4 4" />
    {COLUMNS_BACK.map((c, i) => <Column key={i} c={c} />)}
    <path d="M1145 150l20-6 108 43v753l-128-60z" fill="#4fd84f" />
    <path d="M1145 872l25-6 103 44v30l-128-50z" fill="#3aa84a" fillOpacity=".6" />
    {[500, 250, 0].map((dy) => (
      <g key={dy}>
        {BEAMS_BACK.map((b, i) => <Beam key={i} b={b} dy={dy} color="#1e90ff" edge="#1a86f5" h={60} />)}
        <path d={`M1145 ${145 + dy}l128 46`} stroke="#2a8c3c" strokeWidth="3" strokeDasharray="5 6" />
      </g>
    ))}
    {FOOTINGS_FRONT.map((f, i) => <Footing key={i} f={f} />)}
    {COLUMNS_FRONT.map((c, i) => <Column key={i} c={c} />)}
    {[500, 250, 0].map((dy) => (
      <g key={dy}>
        {BEAMS_FRONT.map((b, i) => <Beam key={i} b={b} dy={dy} color="#1e90ff" edge="#1a86f5" h={60} />)}
      </g>
    ))}
    {[[583, 623, 348, 1100], [740, 780, 408, 1162], [1037, 1077, 323, 1075]].map(([x1, x2, y1, y2]) => (
      [0, 250, 500].map((dy) => (
        <rect key={`${x1}-${dy}`} x={x1} y={y1 + dy} width={x2 - x1} height="62" fill="#128038" fillOpacity=".7" />
      ))
    ))}
    {[250, 500].map((dy) => (
      <g key={dy} fill="#0c7d24">
        {[[180, 176], [410, 270], [603, 349], [760, 409], [1057, 324], [1360, 230]].map(([x, y]) => (
          <path key={x} d={`M${x - 23} ${y + dy}l23-7 23 7-23 7z`} />
        ))}
      </g>
    ))}
    <path d="M1200 166l9-4 9 4-9 5z" fill="#0c7d24" />
  </svg>
);

/* ---------- centre ---------- */

function Viewport() {
  return (
    <>
      <div className="flex h-[55px] shrink-0 justify-end bg-[#efefef]">
        <div className="flex w-[17px] flex-col items-center justify-between border-l border-white pb-[12px] pt-[6px]">
          <svg width="8" height="6" aria-hidden="true"><path d="M4 0l4 4v2H0V4z" fill="#a59d9d" /></svg>
          <svg width="8" height="6" aria-hidden="true"><path d="M4 6l4-4V0H0v2z" fill="#a59d9d" /></svg>
        </div>
      </div>
      <div className="relative flex h-[442px] shrink-0 justify-center overflow-hidden border-t-2 border-[#6b6b6b] bg-white pl-[12px] pt-[13px]">
        <Model />
        <svg width="48" height="40" className="absolute right-px top-0" aria-label="Άξονες">
          <path d="M20 25V5" stroke="#1433c8" strokeWidth="2" />
          <path d="M22 8v4l-2-2zM22 1h6" stroke="#1433c8" />
          <path d="m20 25 17-5" stroke="#ee1111" strokeWidth="2" />
          <path d="m20 25-14-5" stroke="#49c94f" strokeWidth="2" />
          <text x="39" y="17" fontSize="12" fill="#e01414" fontFamily="'Noto Sans', sans-serif">x</text>
          <text x="8" y="15" fontSize="11" fill="#7cb928" fontFamily="'Noto Sans', sans-serif">y</text>
        </svg>
      </div>
    </>
  );
}

const H = "border border-black bg-[#f0f0f0] p-0 font-normal";
const C = "border border-[#606060] p-0";

function LoadTable() {
  return (
    <table className="w-[1150px] table-fixed border-collapse text-[11px] leading-[18px] text-[#1a1a1a]">
      <colgroup>
        {["w-[29px]", "w-[50px]", "w-[50px]", "w-[96px]", "w-[35px]", "w-[50px]", "w-[40px]", "w-[40px]", "w-[40px]"].map((w, i) => <col key={i} className={w} />)}
        {Array.from({ length: 12 }, (_, i) => <col key={i} className="w-[60px]" />)}
      </colgroup>
      <thead>
        <tr className="h-[21px]"><th colSpan={21} className="border-b border-black bg-[#f0f0f0] p-0 font-normal">Γραμμικά Φορτία Στοιχείων</th></tr>
        <tr className="h-[22px]">
          <th rowSpan={3} className="border-b border-dotted border-black bg-[#f0f0f0] p-0 font-normal">α/α</th>
          <th rowSpan={3} className={H}>Στοιχείο</th>
          <th rowSpan={3} className={H}>Π.Φ.</th>
          <th rowSpan={3} className={H}>Αίτιο</th>
          <th rowSpan={3} className={H}>Διευθ.</th>
          <th className={H}>Μήκος</th>
          <th colSpan={2} className={H}>Αρχή-Τέλος</th>
          <th className={H}>Μήκος</th>
          <th colSpan={2} className={H}>Γραμμικό Φορτίο</th>
          <th className={H}>Φορτίο</th>
          <th colSpan={3} className={H}>Θέση Συνισταμένης</th>
          <th colSpan={3} className={H}>Συνολική Δύναμη</th>
          <th colSpan={3} className={H} />
        </tr>
        <tr className="h-[22px]">
          {["L", "x1", "x2", "Δx", "q1", "q2", "Q", "x", "y", "z", "Qx", "Qy", "Qz"].map((t) => <th key={t} className={H}>{t}</th>)}
          <th colSpan={3} className={H} />
        </tr>
        <tr className="h-[22px]">
          <th colSpan={4} className={H}>m</th>
          <th colSpan={2} className={H}>kN/m</th>
          <th className={H}>kN</th>
          <th colSpan={3} className={H}>m</th>
          <th colSpan={3} className={H}>kN</th>
          <th colSpan={3} className={H} />
        </tr>
      </thead>
      <tbody className="align-top">
        {LOADS.map(([name, len, q, x, y, z], i) => (
          <tr key={name} className="h-[20px]">
            <th className="border border-black bg-[#f0f0f0] p-0 pr-[3px] text-right font-normal">{i + 1}</th>
            <td className={`${C} bg-[#e6e6e6] pl-[2px]`}>{name}</td>
            <td className={`${C} bg-[#e6e6e6] pl-[3px]`}>G</td>
            <td className={`${C} bg-[#e6e6e6] pl-[2px]`}>Ίδιο Βάρος</td>
            <td className={`${C} bg-[#e6e6e6] text-center`}>Uz</td>
            <td className={`${C} bg-[#e6c7c7] pr-[3px] text-right`}>{len}</td>
            <td className={`${C} bg-[#e6c7c7] pr-[3px] text-right`}>0.00</td>
            <td className={`${C} bg-[#e6c7c7]`} />
            <td className={`${C} bg-[#e6c7c7]`} />
            <td className={`${C} bg-[#c8c8ff] pr-[3px] text-right`}>-4.06</td>
            <td className={`${C} bg-[#c8c8ff]`} />
            <td className={`${C} bg-[#c8c8e6] pr-[3px] text-right`}>{q}</td>
            {[x, y, z].map((v, k) => <td key={k} className={`${C} bg-[#ffc8c8] pr-[3px] text-right`}>{v}</td>)}
            {["0.00", "0.00", q].map((v, k) => <td key={k} className={`${C} bg-[#c8ffc8] pr-[3px] text-right`}>{v}</td>)}
            {[0, 1, 2].map((k) => <td key={k} className={`${C} bg-[#c8c8ff]`} />)}
          </tr>
        ))}
      </tbody>
    </table>
  );
}

function WorkWindow() {
  return (
    <section className="flex min-h-0 flex-1 flex-col border-t border-[#c4c4c4] bg-[#e6e6e6]">
      <div className="flex h-[45px] shrink-0 items-center justify-between pl-[4px] pr-[5px] pt-[7px]">
        <h2 className="text-[20px] text-[#444]">Παράθυρο Εργασίας 1</h2>
        <div className="pb-[3px]"><PanelButtons /></div>
      </div>
      <div className="flex h-[26px] shrink-0 items-center bg-[#efefef] pb-[2px] pl-[13px] text-[11px] whitespace-nowrap text-[#444]">
        <button type="button">Επιλεγμένα</button>
        <button type="button" className="ml-[7px] h-[19px] w-[30px] bg-[#cfcfcf]">Όλα</button>
        <span className="ml-[5px] h-[20px] w-px bg-[#cdcdcd]" />
        <label htmlFor="load-case" className="ml-[7px] w-[128px]">Περίπτωση Φόρτισης:</label>
        <span className="relative w-[106px]">
          <select id="load-case" className="block h-[20px] w-full appearance-none border border-[#b0b0b0] bg-white pl-[3px]"><option>G</option></select>
          <svg width="6" height="4" className="absolute right-[4px] top-[9px]" aria-hidden="true"><path d="M0 0h6L3 4z" fill="#666" /></svg>
        </span>
        <span className="ml-[6px] h-[20px] w-px bg-[#cdcdcd]" />
        <button type="button" disabled className="ml-[6px] flex items-center gap-[3px] text-[#b0b0b0]">
          <svg width="17" height="12" aria-hidden="true"><path d="M0 10.500h17M2 10V7h4V5h4V3h5v7M6 10V5M10 10V3M13 10V3" fill="none" stroke="#e39a80" /></svg>
          Προσθήκη Φορτίων
        </button>
      </div>
      <div className="mr-px flex min-h-0 flex-1 flex-col border border-[#6b6b6b] bg-[#efefef]">
        <div className="flex min-h-0 flex-1">
          <div className="min-w-0 flex-1 overflow-hidden border-b border-r border-white"><LoadTable /></div>
          <div className="flex w-[17px] justify-center pt-[17px]"><div className="h-[20px] w-[2px] bg-[#8a8585]" /></div>
        </div>
        <div className="flex h-[16px] shrink-0 items-center pl-[17px]"><div className="h-[2px] w-[81%] bg-[#8a8585]" /></div>
      </div>
      <nav className="flex h-[21px] shrink-0 items-stretch pt-[2px] text-[11px] whitespace-nowrap text-[#444]">
        <button type="button" className="flex w-[109px] items-center gap-[4px] border-r border-[#b5b5b5] pl-[6px]">
          <svg width="12" height="15" aria-hidden="true"><rect x="1" y="2" width="10" height="12" fill="#fff" stroke="#574a4a" strokeWidth="1.500" /><path d="M4 1h4v2H4z" fill="#888" /></svg>
          Αποτελέσματα
        </button>
        <button type="button" className="flex w-[146px] items-center gap-px border-r border-[#b5b5b5] bg-[#fdfdfd] pl-[3px]"><GridIcon n="1" />Παράθυρο Εργασίας 1</button>
        <button type="button" className="flex w-[148px] items-center gap-px pl-[5px]"><GridIcon n="2" />Παράθυρο Εργασίας 2</button>
        <button type="button" className="flex items-center gap-[3px] pl-[5px]">
          <House size={14} fill="#f3e3c2" className="text-[#9b7140]" />
          Βοήθεια
        </button>
      </nav>
    </section>
  );
}

/* ---------- right panel ---------- */

const ToolBtn = ({ icon, text, disabled, width }) => (
  <button type="button" disabled={disabled} className={`flex shrink-0 items-center gap-[4px] ${width} ${disabled ? "text-[#b0b0b0]" : "text-[#444]"}`}>
    {icon}
    {text}
  </button>
);

const PlusIcon = ({ fill, stroke }) => (
  <Svg w={15} h={15}><path d="M5.500 1h4v4.500H14v4H9.500V14h-4V9.500H1v-4h4.500z" fill={fill} stroke={stroke} /></Svg>
);

function SectionDrawing() {
  const bars = [
    [586, 353], [652, 353], [709, 353], [768, 353], [832, 353], [586, 470], [832, 470], [586, 580], [832, 580],
    [586, 689], [832, 689], [586, 799], [832, 799], [586, 916], [652, 916], [709, 916], [766, 916], [832, 916],
  ];
  const hooks = [[726, 350], [792, 350], [792, 467], [792, 577]];
  return (
    <svg viewBox="57 234 1305 801" className="h-[267px] w-full" role="img" aria-label="Διατομή υποστυλώματος">
      <g fontFamily="'Liberation Mono', monospace" fontSize="42">
        <text x="644" y="273" fill="#111">18Φ20</text>
        <text x="136" y="646" fill="#111">B500C</text>
        <text x="896" y="675" fill="#e01010">2</text>
        <text x="720" y="822" fill="#e01010" transform="rotate(90 720 822)">3</text>
      </g>
      <circle cx="101" cy="634" r="16" fill="#5a0f3c" stroke="#e8101c" strokeWidth="3" />
      <rect x="551" y="317" width="317" height="635" fill="none" stroke="#f5c21b" strokeWidth="3" />
      <g fill="none" stroke="#f01414" strokeWidth="3">
        <rect x="576" y="341" width="268" height="587" rx="8" />
        <rect x="581" y="346" width="257" height="577" />
        <path d="M641 341v587M647 341v587M773 341v587M778 341v587" />
        <path d="M576 458h268M576 463h268M576 569h268M576 574h268M576 695h268M576 700h268M576 806h268M576 811h268" />
        <path d="M709 836V634h203" />
      </g>
      {hooks.map(([x, y], i) => (
        <path key={i} d={`M${x} ${y + 30}l38-32M${x + 5} ${y + 34}l36-32M${x + 10} ${y + 43}l34-32M${x + 15} ${y + 48}l32-32`} stroke="#f01414" strokeWidth="3" />
      ))}
      {bars.map(([x, y], i) => (
        <rect key={i} x={x - 6} y={y - 5} width="12" height="12" rx="4" fill="#3a0c50" stroke="#c01030" strokeWidth="2" />
      ))}
    </svg>
  );
}

const Hatch = ({ shape }) => (
  <svg width="30" height="30" aria-hidden="true" className="shrink-0">
    <defs>
      <pattern id={`hatch-${shape}`} width="4" height="4" patternUnits="userSpaceOnUse">
        <rect width="4" height="4" fill="#d2d2d2" />
        <path d="M0 4 4 0" stroke="#777" strokeWidth=".8" />
      </pattern>
    </defs>
    {shape === "l"
      ? <path d="M1 1.500h9v16h18v10H1z" fill="url(#hatch-l)" stroke="#111" />
      : <rect x="2" y="2.500" width="25" height="24" fill="url(#hatch-r)" stroke="#111" />}
  </svg>
);

const Arrow = () => (
  <svg width="9" height="5" className="pointer-events-none absolute right-[4px] top-[16px]" aria-hidden="true"><path d="M0 0h9L4.500 5z" fill="#777" /></svg>
);

const Check = ({ id, text, checked, className = "" }) => (
  <label htmlFor={id} className={`flex items-center gap-[2px] whitespace-nowrap ${className}`}>
    <input id={id} type="checkbox" defaultChecked={checked} className="h-[13px] w-[13px] accent-[#1f5fb8]" />
    {text}
  </label>
);

const MINI = "mx-auto block h-[15px] rounded-[3px] border border-[#cfcfcf] bg-white leading-[12px] text-black";

function SectionTable() {
  return (
    <table className="w-[286px] shrink-0 table-fixed border-collapse self-start text-[11px] leading-[15px] text-[#1a1a1a]">
      <colgroup>
        {["w-[15px]", "w-[18px]", "w-[90px]", "w-[18px]", "w-[70px]", "w-[50px]", "w-[25px]"].map((w, i) => <col key={i} className={w} />)}
      </colgroup>
      <thead>
        <tr className="h-[21px]">
          <th className="border-b border-r border-black p-0" />
          {["Δ", "Όνομα", "Ο", "Διάταξη", "ro(o/oo)", "Ιδ"].map((t) => (
            <th key={t} className="border-x border-b border-black bg-[#f0f0f0] p-0 font-normal">{t}</th>
          ))}
        </tr>
      </thead>
      <tbody className="align-top">
        {SECTIONS.map(([name, kind, ro]) => {
          const sel = name === "R35/35";
          return (
            <tr key={name} className={`h-[18px] ${sel ? "text-[#e01414]" : ""}`}>
              <th className="border border-black bg-[#f0f0f0] p-0" />
              <td className={`${C} bg-white`}>{sel && <button type="button" className={`${MINI} w-[14px]`}>&lt;</button>}</td>
              <td className={`${C} bg-white pl-[2px] whitespace-nowrap`}>{name}</td>
              <td className={`${C} bg-white`}>{sel && <button type="button" className={`${MINI} w-[14px]`}>&lt;</button>}</td>
              <td className={`${C} bg-white text-center ${kind === "RS0" ? "italic" : ""}`}>{kind}</td>
              <td className={`${C} bg-white text-center`}>{ro}</td>
              <td className={`${C} bg-[#f0f0f0]`}><button type="button" aria-label={`Ιδιότητες ${name}`} className={`${MINI} w-[22px]`}>...</button></td>
            </tr>
          );
        })}
      </tbody>
    </table>
  );
}

function AddElements() {
  return (
    <aside className="flex w-[448px] shrink-0 flex-col border-l border-[#c6c6c6] bg-[#e6e6e6] text-[11px]">
      <div className="flex h-[46px] shrink-0 justify-between pl-[10px] pr-[6px]">
        <h2 className="pt-[8px] text-[20px] leading-[30px] text-[#444]">Προσθήκη Στοιχείων</h2>
        <svg width="5" height="8" className="mt-[8px]" aria-hidden="true"><path d="M5 0v8L0 4z" fill="#666" /></svg>
      </div>
      <div className="ml-[8px] flex h-[24px] shrink-0 items-center bg-[#efefef] pb-[2px] pl-[14px] whitespace-nowrap">
        <ToolBtn width="w-[49px]" text="Κατ." icon={<Svg w={13} h={13}><path d="M1 1h4v7h7v4H1z" fill="#9bb59b" stroke="#2f7a3e" strokeWidth="1.500" /></Svg>} />
        <ToolBtn width="w-[44px]" text="Ορ." disabled icon={<Svg w={14} h={13}><path d="M1 2h3v6h6V5h3v7H1z" fill="#c3dcf0" stroke="#7eb592" strokeWidth="1.200" /></Svg>} />
        <ToolBtn width="w-[48px]" text="Τεγ." disabled icon={<Svg w={14} h={14}><path d="M1 8 7 1v4l6-2-5 6v4L6 9z" fill="#a3d49c" stroke="#6aa868" /></Svg>} />
        <ToolBtn width="w-[56px]" text="Συνδ." disabled icon={<Svg w={16} h={15}><path d="M2 2l12 11M14 2 2 13" stroke="#c99a6c" strokeWidth="1.500" /><path d="M1 1h3v3H1zM12 1h3v3h-3zM1 11h3v3H1zM12 11h3v3h-3zM6 6h4v3H6z" fill="#a87f57" /></Svg>} />
        <span className="mr-[6px] h-[19px] w-px bg-[#cdcdcd]" />
        <ToolBtn width="w-[65px]" text="Αλλαγή" icon={<Svg w={16} h={15}><rect x="1" y="5" width="11" height="9" fill="#fff" stroke="#3f6fae" /><path d="M1 5h11v2H1z" fill="#3f6fae" /><path d="M3 9h7M3 11h7" stroke="#888" /><path d="m6 3 5-2 5 2-3 4-3-1z" fill="#f0c246" stroke="#9c7a1c" strokeWidth=".6" /></Svg>} />
        <span className="mr-[6px] h-[19px] w-px bg-[#cdcdcd]" />
        <ToolBtn width="w-[48px]" text="Νέα" icon={<PlusIcon fill="#cfe05a" stroke="#3b7d2b" />} />
        <ToolBtn width="w-[84px]" text="Αντιγραφή" disabled icon={<PlusIcon fill="#f4b3c2" stroke="#d68a9c" />} />
        <span className="pb-[8px] text-[13px] text-[#666]">»</span>
      </div>
      <div className="mt-[3px] mr-[2px] ml-[8px] shrink-0 border border-[#6b6b6b] bg-white"><SectionDrawing /></div>

      <div className="mt-[4px] flex shrink-0 gap-[4px] pl-[9px] pr-[2px]">
        <div className="flex min-w-0 flex-1 flex-col gap-[4px] text-[12px] text-[#111]">
          <button type="button" aria-haspopup="listbox" className="relative flex h-[35px] items-center overflow-hidden rounded-[4px] border border-[#cbcbcb] bg-[#fdfdfd] pl-[5px] text-left">
            <span className="opacity-75"><ConcreteIcon /></span>
            <span className="mr-[20px] ml-[8px] min-w-0 overflow-hidden leading-[17px] whitespace-nowrap">
              <b className="block text-[11px] font-bold">Οπλισμένου Σκυροδέματος</b>
              <span className="block text-[11px]">Υποστυλώματα, Τοιχώματα, Δοκοί, Πυρήνες κ</span>
            </span>
            <Arrow />
          </button>
          <label className="relative flex h-[35px] items-center rounded-[4px] border border-[#cbcbcb] bg-[#fdfdfd] pl-[6px]">
            <Hatch shape="l" />
            <select aria-label="Είδος μέλους" className="ml-[9px] flex-1 appearance-none text-[11px]"><option>Υποστυλώματα</option></select>
            <Arrow />
          </label>
          <label className="relative flex h-[35px] items-center rounded-[4px] border border-[#cbcbcb] bg-[#fdfdfd] pl-[6px]">
            <Hatch shape="r" />
            <select aria-label="Σχήμα διατομής" className="ml-[9px] flex-1 appearance-none text-[11px]"><option>Ορθογωνικά</option></select>
            <Arrow />
          </label>
        </div>
        <div className="flex w-[115px] flex-col text-[#111]">
          <div className="flex h-[22px] items-center justify-between">
            <Check id="phi" text="φ(°)=" checked />
            <span className="flex">
              <input aria-label="Γωνία φ" defaultValue="0.0" className="h-[20px] w-[53px] border border-[#6b6b6b] bg-white pr-[1px] text-right text-[11px]" />
              <span className="flex w-[13px] flex-col">
                <button type="button" aria-label="Αύξηση" className="flex h-[10px] items-center justify-center border border-[#cfcfcf] bg-[#fdfdfd]"><svg width="5" height="3" aria-hidden="true"><path d="M0 3h5L2.500 0z" /></svg></button>
                <button type="button" aria-label="Μείωση" className="flex h-[10px] items-center justify-center border border-[#cfcfcf] bg-[#fdfdfd]"><svg width="5" height="3" aria-hidden="true"><path d="M0 0h5L2.500 3z" /></svg></button>
              </span>
            </span>
          </div>
          <Check id="above" text="Αλλαγή Πάνω" className="mt-[20px] h-[17px]" />
          <Check id="below" text="Αλλαγή Κάτω" className="mt-[22px] h-[17px]" />
        </div>
      </div>

      <div className="mt-[3px] flex h-[25px] shrink-0 items-center pl-[8px] pr-[2px] text-[#111]">
        <Check id="asc" text="Α->Ω" checked className="w-[56px]" />
        <Check id="desc" text="Ω->Α" className="w-[56px]" />
        <Check id="used" text="Χρησιμοποιούμενες Πρώτα" className="w-[166px]" />
        <input aria-label="Φίλτρο" className="h-[24px] min-w-0 flex-1 border border-[#6b6b6b] bg-white px-1" />
      </div>

      <div className="mt-px mr-[2px] ml-[8px] flex min-h-0 flex-1 overflow-hidden border border-[#6b6b6b] bg-[#efefef]">
        <SectionTable />
        <div className="flex-1" />
        <div className="flex w-[18px] flex-col items-center border-l border-white">
          <div className="flex-[55]" />
          <div className="w-[2px] flex-[33] bg-[#8a8585]" />
          <div className="flex-[12]" />
        </div>
      </div>
      <div className="ml-[6px] flex h-[8px] shrink-0 items-center justify-center gap-[3px] bg-[#cfcfcf]">
        {Array.from({ length: 10 }, (_, i) => <i key={i} className="h-[3px] w-[3px] bg-[#f6f6f6]" />)}
      </div>
      <StatusIcons />
    </aside>
  );
}

const St = ({ children, label, active }) => (
  <button type="button" aria-label={label} className={`flex h-full w-[26px] items-center justify-center ${active ? "bg-[#cfcfcf]" : ""}`}>{children}</button>
);

function StatusIcons() {
  return (
    <div className="ml-[6px] flex h-[27px] shrink-0 items-center justify-end bg-[#efefef]">
      <St label="Πληροφορίες">
        <Svg w={8} h={15}><path d="M2 0h4v4H2zM1 5h5v8h2v2H0v-2h2V7H1z" fill="#eeb026" /></Svg>
      </St>
      <St label="Στρώσεις"><Layers size={17} fill="#dfe5ea" className="text-[#7f8fa0]" /></St>
      <St label="Προσθήκη" active>
        <Svg w={16} h={16}><path d="M2 1v13h13V9H8V1z" fill="#bbb" stroke="#111" strokeWidth="1.300" /><path d="M2 13 8 6M6 14l5-5M10 14l4-4" stroke="#333" /><path d="M9 3h2V0h3v3h2v3h-2v3h-3V6H9z" fill="#3fb24a" /></Svg>
      </St>
      <St label="Κόμβος">
        <Svg w={16} h={16}><path d="M1 4h11v11H1z" fill="#fff" stroke="#111" /><circle cx="6" cy="10" r="2.500" fill="none" stroke="#e01414" strokeWidth="1.200" /><path d="m8 8 6-6M2 10h2M6 12v2" stroke="#e01414" /><path d="M10 3h2V0h2v3h2v2h-2v3h-2V5h-2z" fill="#3fb24a" /></Svg>
      </St>
      <St label="Διάγραμμα Ν">
        <Svg w={16} h={16}><path d="M1.500 1v13.500H15" fill="none" stroke="#111" /><path d="M2 3c4 2 5 7 12 8M2 6c4 2 5 6 9 7" fill="none" stroke="#a06a6a" /><text x="9" y="7" fontSize="7" fontWeight="700" fontFamily="'Noto Sans', sans-serif">N</text></Svg>
      </St>
      <St label="Αποτελέσματα">
        <Svg w={16} h={16}><path d="M1.500 1v13.500H15" fill="none" stroke="#111" /><path d="M3 8h3v6H3z" fill="#37a447" /><path d="M7 4v10M10 2v12" stroke="#37a447" strokeDasharray="2 1" /><path d="M10 7h4v7h-4z" fill="#e01414" /><path d="M7 10h3v4H7z" fill="#e8c22a" /></Svg>
      </St>
      <St label="CR">
        <Svg w={16} h={16}><text x="1" y="8" fontSize="9" fontWeight="700" fill="#4b64a8" fontFamily="'Noto Sans', sans-serif">CR</text><path d="M1 10h2v5H1z" fill="#3a68d6" /><path d="M5 10h2v5H5z" fill="#3cb8c8" /><path d="M8 10h2v5H8z" fill="#e8c22a" /><path d="M12 10h3v5h-3z" fill="#d83030" /></Svg>
      </St>
      <St label="Τεύχος">
        <Svg w={14} h={16}><path d="M2 1h7l3 3v11H2z" fill="#fff" stroke="#666" /><path d="M4 6h5v5H4z" fill="#6f97cc" /><path d="m6 12 5-4v5z" fill="#d9a93a" /></Svg>
      </St>
      <St label="Διατομή">
        <Svg w={14} h={16}><rect x="2" y="2" width="10" height="12" rx="1" fill="#fff" stroke="#5a1630" strokeWidth="1.200" /><path d="m7 7 4-4M9 8l3-3" stroke="#5a1630" /></Svg>
      </St>
      <St label="Πίνακας">
        <Svg w={14} h={16}><rect x="1" y="2" width="12" height="12" fill="#fff" stroke="#111" strokeWidth="1.200" /><path d="M1 4h12" stroke="#111" /><path d="M3 6h3v2H3zM3 10h3v2H3zM8 9h4v4H8z" fill="#5a1630" /></Svg>
      </St>
      <St label="Χρώματα">
        <Svg w={16} h={16}>
          <path d="m8 8-7-3.500L4 1h4z" fill="#3fc43f" /><path d="M8 8V1h4l3 3.500z" fill="#f0d020" /><path d="m8 8 7-3.500V11z" fill="#f08020" />
          <path d="m8 8 7 3-3 4H8z" fill="#d8203c" /><path d="M8 8v7H4l-3-4z" fill="#2a48c8" /><path d="m8 8-7 3V4.500z" fill="#2898d0" /><circle cx="8" cy="8" r="3" fill="#fff" fillOpacity=".8" />
        </Svg>
      </St>
      <St label="Περισσότερα">
        <span className="flex flex-col items-center text-[13px] leading-[12px] text-[#666]">»<svg width="5" height="3" aria-hidden="true"><path d="M0 0h5L2.500 3z" fill="#777" /></svg></span>
      </St>
    </div>
  );
}

export default function App() {
  return (
    <div className="flex h-screen flex-col overflow-hidden bg-[#e6e6e6] font-['Noto_Sans','Open_Sans',sans-serif]">
      <TitleBar />
      <Ribbon />
      <div className="flex min-h-0 flex-1 pt-px">
        <Navigation />
        <main className="flex min-w-0 flex-1 flex-col">
          <Viewport />
          <WorkWindow />
        </main>
        <AddElements />
      </div>
    </div>
  );
}
